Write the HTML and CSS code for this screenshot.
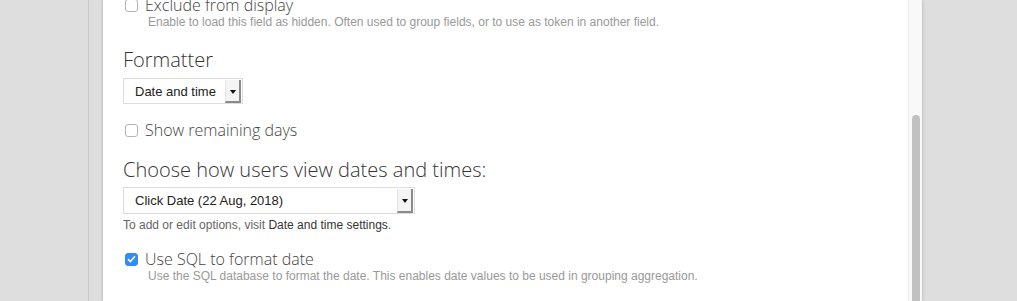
FILE: index.html
```html
<!DOCTYPE html>
<html lang="en">
<head>
    <meta charset="UTF-8">
    <title>Date field settings</title>
    <link rel="stylesheet" href="styles.css">
</head>
<body>
    <div class="sayfa">
        <div class="kenar"></div>

        <div class="panel">
            <div class="icerik">
                <!-- Exclude from display -->
                <div class="secenek ilk">
                    <span class="kutu"></span>
                    <span class="etiket">Exclude from display</span>
                </div>
                <div class="aciklama">Enable to load this field as hidden. Often used to group fields, or to use as token in another field.</div>

                <!-- Formatter -->
                <h2 class="baslik">Formatter</h2>
                <div class="secim kisa">
                    <span class="secim-metin">Date and time</span>
                    <span class="ok"></span>
                </div>

                <div class="secenek kalan">
                    <span class="kutu"></span>
                    <span class="etiket">Show remaining days</span>
                </div>

                <h2 class="baslik">Choose how users view dates and times:</h2>
                <div class="secim uzun">
                    <span class="secim-metin">Click Date (22 Aug, 2018)</span>
                    <span class="ok"></span>
                </div>
                <div class="yardim">To add or edit options, visit <a href="#">Date and time settings</a>.</div>

                <div class="secenek sql">
                    <span class="kutu secili">
                        <svg width="9" height="8" viewBox="0 0 9 8"><path d="M1 4.2 L3.4 6.5 L8 1.3" fill="none" stroke="#fff" stroke-width="1.6"/></svg>
                    </span>
                    <span class="etiket">Use SQL to format date</span>
                </div>
                <div class="aciklama">Use the SQL database to format the date. This enables date values to be used in grouping aggregation.</div>
            </div>

            <!-- kaydırma çubuğu -->
            <div class="kaydirma">
                <div class="tutamac"></div>
            </div>
        </div>
    </div>
</body>
</html>
```

FILE: styles.css
```css
body {
    margin: 0;
    background-color: #dedede;
    overflow: hidden;
    font-family: "Liberation Sans", Arial, sans-serif;
}

.sayfa {
    display: flex;
    height: 301px;
}

/* soldaki gri şerit */
.kenar {
    width: 88px;
    border-right: 1px solid #c9c9c9;
    margin-right: 14px;
}

.panel {
    display: flex;
    width: 819px;
    background-color: #fff;
    box-shadow: 0 0 3px rgba(0,0,0,0.25);
}

.icerik {
    flex: 1;
    padding-left: 20px;
    overflow: hidden;
}

.secenek {
    display: flex;
    align-items: center;
    height: 20px;
    margin-left: 2px;
}

.secenek.ilk { margin-top: -5px; }
.secenek.kalan { margin-top: 16px; }
.secenek.sql { margin-top: 16px; }

.kutu {
    width: 11px;
    height: 11px;
    border: 1px solid #b5b5b5;
    border-radius: 3px;
    margin-right: 7px;
    display: flex;
    align-items: center;
    justify-content: center;
    flex-shrink: 0;
}

.kutu.secili {
    background-color: #2f8df5;
    border-color: #2f8df5;
}

.etiket {
    font-family: "Open Sans", sans-serif;
    font-weight: 300;
    font-size: 16px;
    color: #444;
}

.aciklama {
    font-size: 12px;
    color: #999;
    margin-left: 25px;
    line-height: 15px;
}

.baslik {
    font-family: "Open Sans", sans-serif;
    font-weight: 300;
    font-size: 20px;
    color: #333;
    margin: 15px 0 0 0;
    line-height: 30px;
}

/* açılır liste */
.secim {
    display: flex;
    align-items: center;
    justify-content: space-between;
    border: 1px solid #dcdcdc;
    box-sizing: border-box;
    height: 26px;
    padding-left: 11px;
    margin-top: 3px;
}

.secim.kisa { width: 120px; }
.secim.uzun { width: 292px; height: 27px; margin-top: 2px; }

.secim-metin {
    font-size: 13px;
    color: #222;
}

.ok {
    width: 13px;
    align-self: stretch;
    margin: 1px 1px 0 0;
    background-color: #f4f4f4;
    border-right: 2px solid #8a8a8a;
    border-bottom: 2px solid #8a8a8a;
    border-left: 1px solid #e4e4e4;
    position: relative;
}

.ok::after {
    content: "";
    position: absolute;
    left: 4px;
    top: 10px;
    border-left: 3px solid transparent;
    border-right: 3px solid transparent;
    border-top: 4px solid #111;
}

.yardim {
    font-size: 12px;
    color: #666;
    margin-top: 4px;
    line-height: 15px;
}

.yardim a {
    color: #333;
    text-decoration: none;
}

.kaydirma {
    width: 14px;
    background-color: #f9f9f9;
    border-left: 1px solid #ececec;
    box-sizing: border-box;
    position: relative;
}

.tutamac {
    position: absolute;
    left: 3px;
    top: 115px;
    width: 8px;
    height: 200px;
    border-radius: 4px;
    background-color: #c1c1c1;
}
```
